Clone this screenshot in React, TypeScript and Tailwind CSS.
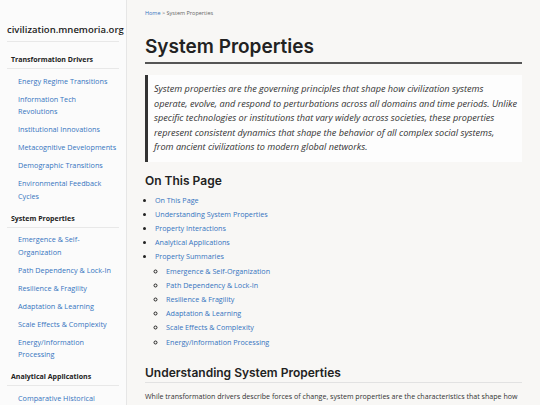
import type { FC } from 'react'

interface NavSection {
  title: string
  links: string[]
}

// \n marks where the narrow sidebar wraps a link
const navSections: NavSection[] = [
  {
    title: 'Transformation Drivers',
    links: [
      'Energy Regime Transitions',
      'Information Tech\nRevolutions',
      'Institutional Innovations',
      'Metacognitive Developments',
      'Demographic Transitions',
      'Environmental Feedback\nCycles'
    ]
  },
  {
    title: 'System Properties',
    links: [
      'Emergence & Self-\nOrganization',
      'Path Dependency & Lock-In',
      'Resilience & Fragility',
      'Adaptation & Learning',
      'Scale Effects & Complexity',
      'Energy/Information\nProcessing'
    ]
  },
  {
    title: 'Analytical Applications',
    links: ['Comparative Historical\nAnalysis', 'Scenario Planning']
  }
]

const tocItems = [
  'On This Page',
  'Understanding System Properties',
  'Property Interactions',
  'Analytical Applications'
]

const tocSubItems = [
  'Emergence & Self-Organization',
  'Path Dependency & Lock-In',
  'Resilience & Fragility',
  'Adaptation & Learning',
  'Scale Effects & Complexity',
  'Energy/Information Processing'
]

const introLines = [
  'System properties are the governing principles that shape how civilization systems',
  'operate, evolve, and respond to perturbations across all domains and time periods. Unlike',
  'specific technologies or institutions that vary widely across societies, these properties',
  'represent consistent dynamics that shape the behavior of all complex social systems,',
  'from ancient civilizations to modern global networks.'
]

const body = "font-['Open_Sans',_'Liberation_Sans',_sans-serif]"
const heading = "font-['Inter',_'Open_Sans',_sans-serif]"

const Sidebar: FC = () => (
  <aside className="w-[127px] shrink-0 h-[405px] overflow-hidden bg-[#fbfbfb] border-r border-[#e6e6e6] px-[7px] pt-[24px]">
    <div className="pb-[5px] border-b border-[#e8e8e8]">
      <div className="text-[9.5px] leading-[12px] font-semibold text-[#1c1c1c] whitespace-nowrap">
        civilization.mnemoria.org
      </div>
    </div>
    <nav className="mt-[13px]">
      {navSections.map((section) => (
        <div key={section.title} className="mb-[8.5px]">
          <div className="pl-[4px] pb-[3px] border-b border-[#e8e8e8] text-[7px] leading-[10px] font-bold text-[#222]">
            {section.title}
          </div>
          <ul className="mt-[3px]">
            {section.links.map((link) => (
              <li
                key={link}
                className="pl-[11px] py-[2.75px] text-[7.25px] leading-[12.5px] text-[#3574c0] whitespace-pre-line"
              >
                {link}
              </li>
            ))}
          </ul>
        </div>
      ))}
    </nav>
  </aside>
)

export default function App() {
  return (
    <div className={`w-[540px] h-[405px] overflow-hidden flex bg-[#f8f7f5] ${body}`}>
      <Sidebar />
      <main className="flex-1 min-w-0 px-[18px] pt-[9px]">
        <div className="text-[5.5px] leading-[8px] text-[#666]">
          <span className="text-[#3574c0]">Home</span> &gt; System Properties
        </div>

        <h1
          className={`mt-[18px] pb-[3px] border-b-2 border-[#555] text-[19px] leading-[24px] font-semibold text-[#222] ${heading}`}
        >
          System Properties
        </h1>

        <blockquote className="mt-[11px] bg-[#fdfdfd] border-l-[3px] border-[#333] pl-[6px] pr-[4px] pt-[7px] pb-[7px] text-[9.15px] leading-[14.5px] italic text-[#333]">
          {introLines.map((line) => (
            <div key={line} className="whitespace-nowrap">
              {line}
            </div>
          ))}
        </blockquote>

        <h2 className={`mt-[11.5px] text-[12px] leading-[15px] font-semibold text-[#222] ${heading}`}>
          On This Page
        </h2>

        <ul className="mt-[4.5px] pl-[10px] list-disc text-[7.2px] leading-[14.2px] text-[#3574c0] marker:text-[#222]">
          {tocItems.map((item) => (
            <li key={item}>{item}</li>
          ))}
          <li>
            Property Summaries
            <ul className="pl-[11px] list-[circle]">
              {tocSubItems.map((item) => (
                <li key={item}>{item}</li>
              ))}
            </ul>
          </li>
        </ul>

        <h2
          className={`mt-[16.5px] pb-[2px] border-b border-[#e2e2e2] text-[12px] leading-[15px] font-semibold text-[#222] ${heading}`}
        >
          Understanding System Properties
        </h2>

        <p className="mt-[7px] text-[7.1px] leading-[12px] text-[#333] whitespace-nowrap">
          While transformation drivers describe forces of change, system properties are the
          characteristics that shape how
        </p>
      </main>
    </div>
  )
}
